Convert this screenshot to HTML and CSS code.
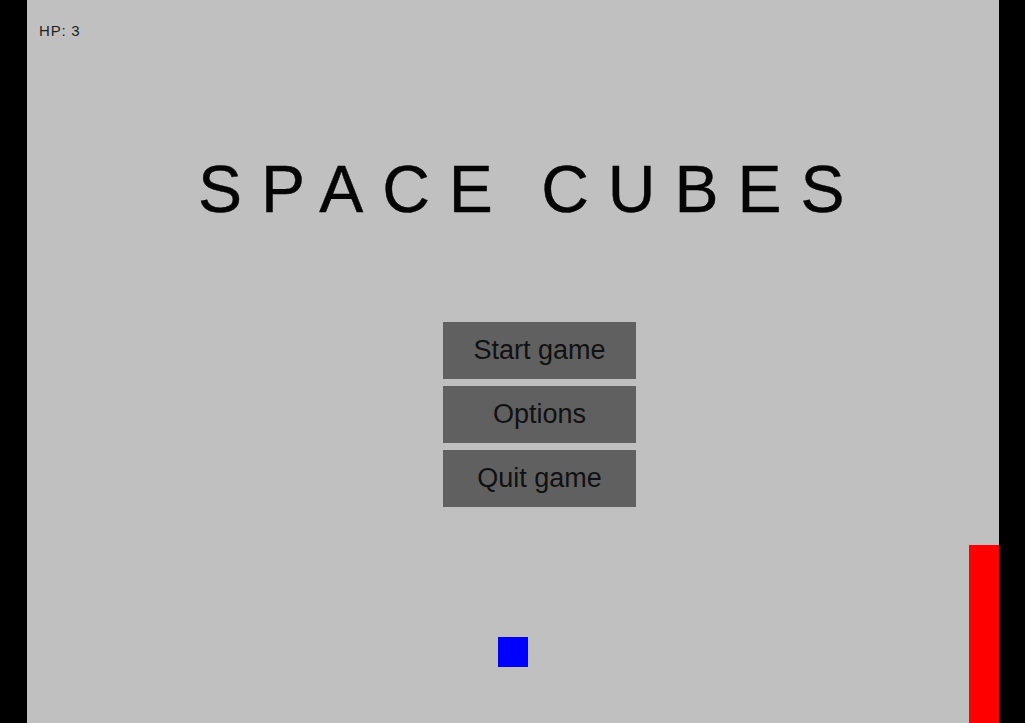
FILE: index.html
```html
<!DOCTYPE html>
<html>
<head>
<meta charset="utf-8">
<title>Space Cubes</title>
<link rel="stylesheet" href="styles.css">
</head>
<body>
<div class="stage">
  <div class="hp">HP: 3</div>
  <h1 class="title">SPACE CUBES</h1>
  <div class="menu">
    <div class="btn">Start game</div>
    <div class="btn">Options</div>
    <div class="btn">Quit game</div>
  </div>
  <div class="player"></div>
  <div class="enemy"></div>
</div>
</body>
</html>
```

FILE: styles.css
```css
html, body {
  margin: 0;
  padding: 0;
  background: #000;
  height: 100%;
  overflow: hidden;
}
.stage {
  position: relative;
  margin-left: 27px;
  width: 972px;
  height: 723px;
  background: #c0c0c0;
  display: flex;
  flex-direction: column;
  font-family: "Liberation Sans", Arial, sans-serif;
}
.hp {
  margin: 22px 0 0 12px;
  font-size: 15px;
  line-height: 18px;
  letter-spacing: 0.8px;
  color: #1e1e1e;
}
.title {
  margin: 116px 0 0 171px;
  font-size: 66px;
  line-height: 66px;
  font-weight: normal;
  letter-spacing: 19px;
  word-spacing: -8px;
  color: #050505;
  white-space: nowrap;
  -webkit-text-stroke: 0.4px #050505;
}
.menu {
  margin: 100px 0 0 416px;
  display: flex;
  flex-direction: column;
  gap: 7px;
  width: 193px;
}
.btn {
  height: 57px;
  background: #606060;
  display: flex;
  align-items: center;
  justify-content: center;
  font-size: 27px;
  color: #111;
}
.player {
  position: absolute;
  left: 471px;
  top: 637px;
  width: 30px;
  height: 30px;
  background: #0000ff;
}
.enemy {
  position: absolute;
  right: 0;
  top: 545px;
  width: 30px;
  height: 178px;
  background: #ff0000;
}
```
